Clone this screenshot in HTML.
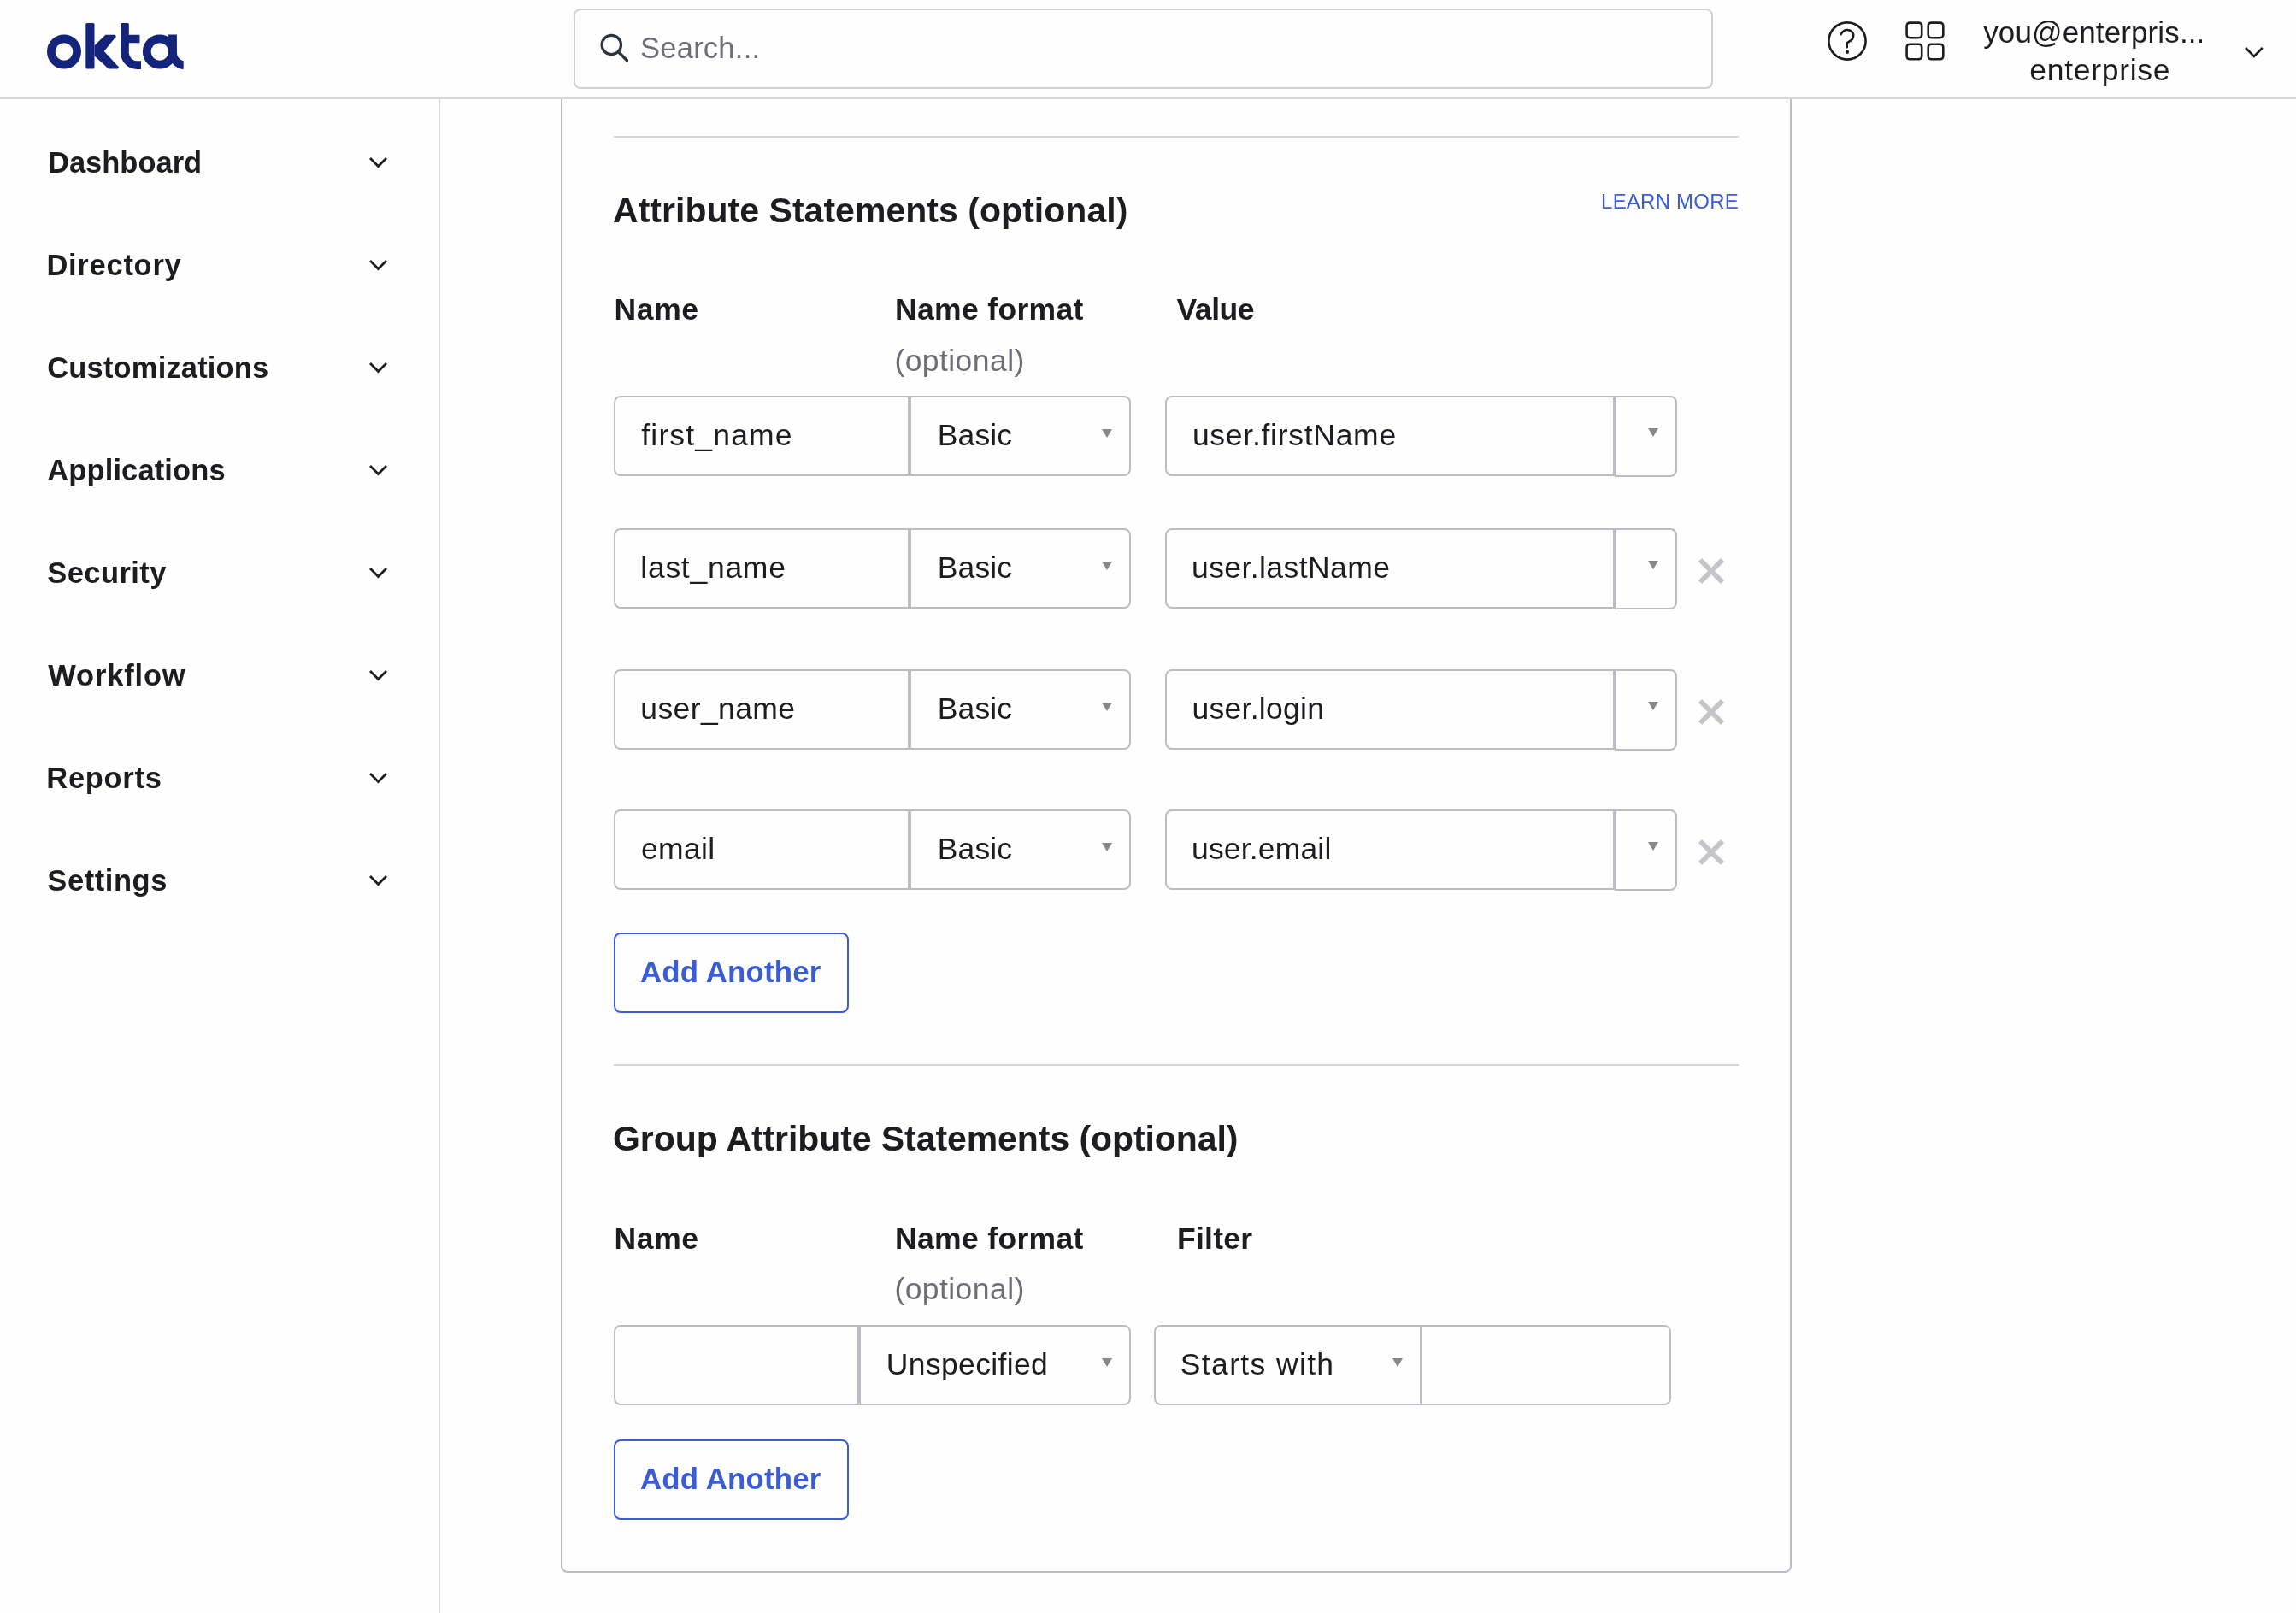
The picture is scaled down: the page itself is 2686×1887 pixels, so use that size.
<!DOCTYPE html>
<html><head><meta charset="utf-8"><title>Okta - Attribute Statements</title><style>
html,body{margin:0;padding:0;}
body{width:2686px;height:1887px;position:relative;overflow:hidden;background:#fefefe;font-family:"Liberation Sans",sans-serif;}
.t{position:absolute;line-height:0;white-space:nowrap;will-change:opacity;opacity:0.999;}
.b{position:absolute;box-sizing:border-box;}
.r{position:absolute;}
svg.r{overflow:visible;}
</style></head><body>
<div class="r" style="left:513px;top:115px;width:2px;height:1772px;background:#d7d7dc;"></div>
<div class="t" style="left:56.0px;top:189.93px;font-size:34.5px;font-weight:bold;color:#1d1d21;">Dashboard</div>
<svg class="r" style="left:429.0px;top:181px" width="27" height="17.5" viewBox="0 0 27 17.5"><polyline points="4,4 13.5,13.5 23,4" fill="none" stroke="#1d1d21" stroke-width="2.8" stroke-linecap="butt" stroke-linejoin="miter"/></svg>
<div class="t" style="left:54.4px;top:309.93px;font-size:34.5px;font-weight:bold;color:#1d1d21;letter-spacing:0.738px;">Directory</div>
<svg class="r" style="left:429.0px;top:301px" width="27" height="17.5" viewBox="0 0 27 17.5"><polyline points="4,4 13.5,13.5 23,4" fill="none" stroke="#1d1d21" stroke-width="2.8" stroke-linecap="butt" stroke-linejoin="miter"/></svg>
<div class="t" style="left:55.3px;top:429.93px;font-size:34.5px;font-weight:bold;color:#1d1d21;letter-spacing:0.162px;">Customizations</div>
<svg class="r" style="left:429.0px;top:421px" width="27" height="17.5" viewBox="0 0 27 17.5"><polyline points="4,4 13.5,13.5 23,4" fill="none" stroke="#1d1d21" stroke-width="2.8" stroke-linecap="butt" stroke-linejoin="miter"/></svg>
<div class="t" style="left:55.3px;top:549.92px;font-size:34.5px;font-weight:bold;color:#1d1d21;letter-spacing:0.118px;">Applications</div>
<svg class="r" style="left:429.0px;top:541px" width="27" height="17.5" viewBox="0 0 27 17.5"><polyline points="4,4 13.5,13.5 23,4" fill="none" stroke="#1d1d21" stroke-width="2.8" stroke-linecap="butt" stroke-linejoin="miter"/></svg>
<div class="t" style="left:55.3px;top:669.92px;font-size:34.5px;font-weight:bold;color:#1d1d21;letter-spacing:0.429px;">Security</div>
<svg class="r" style="left:429.0px;top:661px" width="27" height="17.5" viewBox="0 0 27 17.5"><polyline points="4,4 13.5,13.5 23,4" fill="none" stroke="#1d1d21" stroke-width="2.8" stroke-linecap="butt" stroke-linejoin="miter"/></svg>
<div class="t" style="left:56.3px;top:789.92px;font-size:34.5px;font-weight:bold;color:#1d1d21;letter-spacing:0.814px;">Workflow</div>
<svg class="r" style="left:429.0px;top:781px" width="27" height="17.5" viewBox="0 0 27 17.5"><polyline points="4,4 13.5,13.5 23,4" fill="none" stroke="#1d1d21" stroke-width="2.8" stroke-linecap="butt" stroke-linejoin="miter"/></svg>
<div class="t" style="left:54.3px;top:909.92px;font-size:34.5px;font-weight:bold;color:#1d1d21;letter-spacing:0.7px;">Reports</div>
<svg class="r" style="left:429.0px;top:901px" width="27" height="17.5" viewBox="0 0 27 17.5"><polyline points="4,4 13.5,13.5 23,4" fill="none" stroke="#1d1d21" stroke-width="2.8" stroke-linecap="butt" stroke-linejoin="miter"/></svg>
<div class="t" style="left:55.3px;top:1029.92px;font-size:34.5px;font-weight:bold;color:#1d1d21;letter-spacing:0.571px;">Settings</div>
<svg class="r" style="left:429.0px;top:1021px" width="27" height="17.5" viewBox="0 0 27 17.5"><polyline points="4,4 13.5,13.5 23,4" fill="none" stroke="#1d1d21" stroke-width="2.8" stroke-linecap="butt" stroke-linejoin="miter"/></svg>
<div class="b" style="left:656px;top:-100px;width:1440px;height:1940px;border:2px solid #bdbdc4;border-radius:8px;background:#fefefe;"></div>
<div class="r" style="left:718px;top:159px;width:1316px;height:2px;background:#d3d3d8;"></div>
<div class="t" style="left:717.0px;top:245.65px;font-size:41px;font-weight:bold;color:#1d1d21;letter-spacing:0.033px;">Attribute Statements (optional)</div>
<div class="t" style="left:1873.1px;top:235.60px;font-size:24px;color:#3a5dd6;letter-spacing:0.211px;">LEARN MORE</div>
<div class="t" style="left:718.6px;top:361.77px;font-size:35.5px;font-weight:bold;color:#1d1d21;letter-spacing:0.6px;">Name</div>
<div class="t" style="left:1047.0px;top:361.77px;font-size:35.5px;font-weight:bold;color:#1d1d21;letter-spacing:0.34px;">Name format</div>
<div class="t" style="left:1376.6px;top:361.77px;font-size:35.5px;font-weight:bold;color:#1d1d21;letter-spacing:-0.45px;">Value</div>
<div class="t" style="left:1046.4px;top:421.77px;font-size:35.5px;color:#6e6e78;letter-spacing:0.433px;">(optional)</div>
<div class="b" style="left:718px;top:463px;width:605px;height:94px;border:2px solid #bcbcc3;border-radius:8px;background:#fefefe;"></div>
<div class="r" style="left:1062px;top:463px;width:4px;height:94px;background:#bcbcc3;"></div>
<div class="t" style="left:750.3px;top:508.57px;font-size:35.5px;color:#1d1d21;letter-spacing:1.167px;">first_name</div>
<div class="t" style="left:1096.8px;top:508.57px;font-size:35.5px;color:#1d1d21;letter-spacing:0.125px;">Basic</div>
<svg class="r" style="left:1289px;top:502.2px" width="12" height="10.000000000000057" viewBox="0 0 12 10.000000000000057"><polygon points="0,0 12,0 6.0,10.000000000000057" fill="#888"/></svg>
<div class="b" style="left:1363px;top:463px;width:599px;height:94px;border:2px solid #bcbcc3;border-radius:8px;background:#fefefe;"></div>
<div class="r" style="left:1887px;top:463px;width:4px;height:94px;background:#bcbcc3;"></div>
<div class="b" style="left:1889px;top:463px;width:73px;height:95px;border:2px solid #bcbcc3;border-radius:0 8px 8px 0;background:#fefefe;"></div>
<div class="t" style="left:1394.9px;top:508.57px;font-size:35.5px;color:#1d1d21;letter-spacing:0.723px;">user.firstName</div>
<svg class="r" style="left:1928px;top:500.5px" width="12" height="10.0" viewBox="0 0 12 10.0"><polygon points="0,0 12,0 6.0,10.0" fill="#888"/></svg>
<div class="b" style="left:718px;top:618px;width:605px;height:94px;border:2px solid #bcbcc3;border-radius:8px;background:#fefefe;"></div>
<div class="r" style="left:1062px;top:618px;width:4px;height:94px;background:#bcbcc3;"></div>
<div class="t" style="left:749.3px;top:663.58px;font-size:35.5px;color:#1d1d21;letter-spacing:0.725px;">last_name</div>
<div class="t" style="left:1096.8px;top:663.58px;font-size:35.5px;color:#1d1d21;letter-spacing:0.125px;">Basic</div>
<svg class="r" style="left:1289px;top:657.2px" width="12" height="10.0" viewBox="0 0 12 10.0"><polygon points="0,0 12,0 6.0,10.0" fill="#888"/></svg>
<div class="b" style="left:1363px;top:618px;width:599px;height:94px;border:2px solid #bcbcc3;border-radius:8px;background:#fefefe;"></div>
<div class="r" style="left:1887px;top:618px;width:4px;height:94px;background:#bcbcc3;"></div>
<div class="b" style="left:1889px;top:618px;width:73px;height:95px;border:2px solid #bcbcc3;border-radius:0 8px 8px 0;background:#fefefe;"></div>
<div class="t" style="left:1394.0px;top:663.58px;font-size:35.5px;color:#1d1d21;letter-spacing:0.417px;">user.lastName</div>
<svg class="r" style="left:1928px;top:655.5px" width="12" height="10.0" viewBox="0 0 12 10.0"><polygon points="0,0 12,0 6.0,10.0" fill="#888"/></svg>
<svg class="r" style="left:1982.5px;top:649px" width="38" height="38" viewBox="-19 -19 38 38"><path d="M-13,-13 L13,13 M13,-13 L-13,13" stroke="#c4c4c9" stroke-width="5.9" fill="none"/></svg>
<div class="b" style="left:718px;top:783px;width:605px;height:94px;border:2px solid #bcbcc3;border-radius:8px;background:#fefefe;"></div>
<div class="r" style="left:1062px;top:783px;width:4px;height:94px;background:#bcbcc3;"></div>
<div class="t" style="left:749.3px;top:828.58px;font-size:35.5px;color:#1d1d21;letter-spacing:0.388px;">user_name</div>
<div class="t" style="left:1096.8px;top:828.58px;font-size:35.5px;color:#1d1d21;letter-spacing:0.125px;">Basic</div>
<svg class="r" style="left:1289px;top:822.2px" width="12" height="10.0" viewBox="0 0 12 10.0"><polygon points="0,0 12,0 6.0,10.0" fill="#888"/></svg>
<div class="b" style="left:1363px;top:783px;width:599px;height:94px;border:2px solid #bcbcc3;border-radius:8px;background:#fefefe;"></div>
<div class="r" style="left:1887px;top:783px;width:4px;height:94px;background:#bcbcc3;"></div>
<div class="b" style="left:1889px;top:783px;width:73px;height:95px;border:2px solid #bcbcc3;border-radius:0 8px 8px 0;background:#fefefe;"></div>
<div class="t" style="left:1394.5px;top:828.58px;font-size:35.5px;color:#1d1d21;letter-spacing:0.278px;">user.login</div>
<svg class="r" style="left:1928px;top:820.5px" width="12" height="10.0" viewBox="0 0 12 10.0"><polygon points="0,0 12,0 6.0,10.0" fill="#888"/></svg>
<svg class="r" style="left:1982.5px;top:814px" width="38" height="38" viewBox="-19 -19 38 38"><path d="M-13,-13 L13,13 M13,-13 L-13,13" stroke="#c4c4c9" stroke-width="5.9" fill="none"/></svg>
<div class="b" style="left:718px;top:947px;width:605px;height:94px;border:2px solid #bcbcc3;border-radius:8px;background:#fefefe;"></div>
<div class="r" style="left:1062px;top:947px;width:4px;height:94px;background:#bcbcc3;"></div>
<div class="t" style="left:750.0px;top:992.58px;font-size:35.5px;color:#1d1d21;letter-spacing:0.3px;">email</div>
<div class="t" style="left:1096.8px;top:992.58px;font-size:35.5px;color:#1d1d21;letter-spacing:0.125px;">Basic</div>
<svg class="r" style="left:1289px;top:986.2px" width="12" height="10.0" viewBox="0 0 12 10.0"><polygon points="0,0 12,0 6.0,10.0" fill="#888"/></svg>
<div class="b" style="left:1363px;top:947px;width:599px;height:94px;border:2px solid #bcbcc3;border-radius:8px;background:#fefefe;"></div>
<div class="r" style="left:1887px;top:947px;width:4px;height:94px;background:#bcbcc3;"></div>
<div class="b" style="left:1889px;top:947px;width:73px;height:95px;border:2px solid #bcbcc3;border-radius:0 8px 8px 0;background:#fefefe;"></div>
<div class="t" style="left:1394.0px;top:992.58px;font-size:35.5px;color:#1d1d21;letter-spacing:0.167px;">user.email</div>
<svg class="r" style="left:1928px;top:984.5px" width="12" height="10.0" viewBox="0 0 12 10.0"><polygon points="0,0 12,0 6.0,10.0" fill="#888"/></svg>
<svg class="r" style="left:1982.5px;top:978px" width="38" height="38" viewBox="-19 -19 38 38"><path d="M-13,-13 L13,13 M13,-13 L-13,13" stroke="#c4c4c9" stroke-width="5.9" fill="none"/></svg>
<div class="b" style="left:718px;top:1091px;width:275px;height:94px;border:2px solid #3a5dd6;border-radius:8px;background:#fefefe;"></div>
<div class="t" style="left:748.9px;top:1136.82px;font-size:34.8px;font-weight:bold;color:#3a5dd6;letter-spacing:0.21px;">Add Another</div>
<div class="r" style="left:718px;top:1245px;width:1316px;height:2px;background:#d3d3d8;"></div>
<div class="t" style="left:717.0px;top:1331.65px;font-size:41px;font-weight:bold;color:#1d1d21;letter-spacing:-0.075px;">Group Attribute Statements (optional)</div>
<div class="t" style="left:718.6px;top:1448.58px;font-size:35.5px;font-weight:bold;color:#1d1d21;letter-spacing:0.6px;">Name</div>
<div class="t" style="left:1047.0px;top:1448.58px;font-size:35.5px;font-weight:bold;color:#1d1d21;letter-spacing:0.34px;">Name format</div>
<div class="t" style="left:1377.1px;top:1448.58px;font-size:35.5px;font-weight:bold;color:#1d1d21;letter-spacing:0.24px;">Filter</div>
<div class="t" style="left:1046.4px;top:1507.78px;font-size:35.5px;color:#6e6e78;letter-spacing:0.433px;">(optional)</div>
<div class="b" style="left:718px;top:1550px;width:605px;height:94px;border:2px solid #bcbcc3;border-radius:8px;background:#fefefe;"></div>
<div class="r" style="left:1003px;top:1550px;width:4px;height:94px;background:#bcbcc3;"></div>
<div class="t" style="left:1036.8px;top:1595.58px;font-size:35.5px;color:#1d1d21;letter-spacing:0.35px;">Unspecified</div>
<svg class="r" style="left:1289px;top:1589.3px" width="12" height="10.0" viewBox="0 0 12 10.0"><polygon points="0,0 12,0 6.0,10.0" fill="#888"/></svg>
<div class="b" style="left:1350px;top:1550px;width:605px;height:94px;border:2px solid #bcbcc3;border-radius:8px;background:#fefefe;"></div>
<div class="r" style="left:1661px;top:1550px;width:2px;height:94px;background:#bcbcc3;"></div>
<div class="t" style="left:1380.8px;top:1595.58px;font-size:35.5px;color:#1d1d21;letter-spacing:1.36px;">Starts with</div>
<svg class="r" style="left:1629px;top:1589.3px" width="12" height="10.0" viewBox="0 0 12 10.0"><polygon points="0,0 12,0 6.0,10.0" fill="#888"/></svg>
<div class="b" style="left:718px;top:1684px;width:275px;height:94px;border:2px solid #3a5dd6;border-radius:8px;background:#fefefe;"></div>
<div class="t" style="left:748.9px;top:1729.82px;font-size:34.8px;font-weight:bold;color:#3a5dd6;letter-spacing:0.21px;">Add Another</div>
<div class="r" style="left:0px;top:0px;width:2686px;height:114px;background:#fefefe;"></div>
<div class="r" style="left:0px;top:114px;width:2686px;height:2px;background:#d7d7dc;"></div>
<svg class="r" style="left:0;top:0" width="230" height="100" viewBox="0 0 230 100">
<g fill="#13247a">
<circle cx="75" cy="60.5" r="15.15" fill="none" stroke="#13247a" stroke-width="9.7"/>
<rect x="100.3" y="27" width="10.2" height="53.5" rx="1.5"/>
<polygon points="110.5,53.3 123.4,40.8 134.5,40.8 136,42.5 121.8,60 139,78.5 138,80.5 127,80.5 110.5,65.5"/>
<rect x="141" y="27" width="9.8" height="35" rx="1.5"/>
<rect x="149" y="40.8" width="14.5" height="9.4" rx="1"/>
<path d="M141,61.5 A19.5,19.5 0 0 0 160.5,81 L165,81 L165,71.3 L160.5,71.3 A9.8,9.8 0 0 1 150.8,61.5 Z"/>
<circle cx="186.9" cy="60.5" r="15.15" fill="none" stroke="#13247a" stroke-width="9.7"/>
<rect x="197" y="40.5" width="9.9" height="22"/>
<path d="M197,61.5 A19.7,19.7 0 0 0 214.7,81 L214.7,71.3 A9.8,9.8 0 0 1 206.9,61.5 Z"/>
</g></svg>
<div class="b" style="left:671px;top:10px;width:1333px;height:94px;border:2px solid #d0d0d6;border-radius:8px;background:#fefefe;"></div>
<svg class="r" style="left:698px;top:36px" width="44" height="42" viewBox="0 0 44 42"><circle cx="17.3" cy="16.5" r="11.2" fill="none" stroke="#2a3540" stroke-width="3.2"/><line x1="25.5" y1="24.8" x2="35.5" y2="34.8" stroke="#2a3540" stroke-width="3.4" stroke-linecap="round"/></svg>
<div class="t" style="left:749.0px;top:55.92px;font-size:34.5px;color:#6e6e78;letter-spacing:0.25px;">Search...</div>
<svg class="r" style="left:2130px;top:15px" width="70" height="70" viewBox="0 0 70 70"><circle cx="31" cy="33" r="21.6" fill="none" stroke="#1d1d21" stroke-width="2.6"/><path d="M23.6,25.2 C25.5,21.5 28.2,20 31,20 C35.2,20 38.2,23.2 38.2,26.8 C38.2,30.5 35.8,32.6 32.6,34 C31.3,34.6 30.7,35.3 30.7,36.6 L30.7,40.2" fill="none" stroke="#1d1d21" stroke-width="2.6" stroke-linecap="round"/><circle cx="31" cy="45.9" r="2.1" fill="#1d1d21"/></svg>
<svg class="r" style="left:2220px;top:15px" width="70" height="70" viewBox="0 0 70 70" fill="none" stroke="#1d1d21" stroke-width="2.6">
<rect x="10.6" y="11.6" width="17.6" height="17.6" rx="3.5"/><rect x="35.7" y="11.6" width="17.6" height="17.6" rx="3.5"/>
<rect x="10.6" y="36.7" width="17.6" height="17.6" rx="3.5"/><rect x="35.7" y="36.7" width="17.6" height="17.6" rx="3.5"/></svg>
<div class="t" style="left:2320.2px;top:37.75px;font-size:35px;color:#1d1d21;letter-spacing:0.12px;">you@enterpris...</div>
<div class="t" style="left:2374.3px;top:81.58px;font-size:35.5px;color:#1d1d21;letter-spacing:0.711px;">enterprise</div>
<svg class="r" style="left:2622.9px;top:51.5px" width="27.8" height="18" viewBox="0 0 27.8 18"><polyline points="4,4 13.9,14 23.8,4" fill="none" stroke="#1d1d21" stroke-width="2.6" stroke-linecap="butt" stroke-linejoin="miter"/></svg>
</body></html>
